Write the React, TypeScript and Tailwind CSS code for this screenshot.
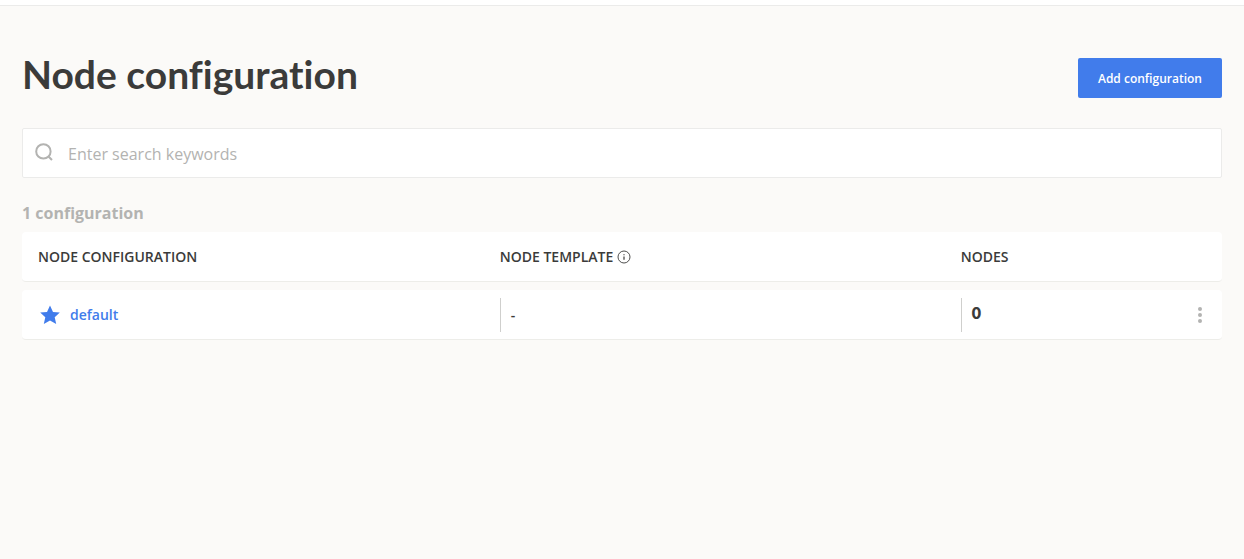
import React from "react";

type Configuration = { name: string; template: string; nodes: number };

const configurations: Configuration[] = [{ name: "default", template: "-", nodes: 0 }];

function SearchIcon() {
  return (
    <svg className="size-5 shrink-0" viewBox="0 0 20 20" fill="none" stroke="#b3b3b1" strokeWidth="2" aria-hidden="true">
      <circle cx="9.4" cy="9.4" r="7.2" />
      <path d="M14.2 14.2l3.8 3.8" />
    </svg>
  );
}

function InfoIcon() {
  return (
    <svg className="size-3.5" viewBox="0 0 14 14" fill="none" stroke="#3b3b3a" aria-hidden="true">
      <circle cx="7" cy="7" r="6" strokeWidth="0.9" />
      <path d="M7 6.5v3.3M7 4.2v1" strokeWidth="1.2" />
    </svg>
  );
}

function StarIcon() {
  return (
    <svg className="size-5" viewBox="0 0 20 20" fill="#417ceb" aria-hidden="true">
      <path d="M10 .4l3 6.5 6.8.7-5.1 4.6 1.5 6.8L10 15.5 3.8 19l1.5-6.8L.2 7.6l6.8-.7z" />
    </svg>
  );
}

function MoreIcon() {
  return (
    <svg className="h-4 w-1" viewBox="0 0 4 16" fill="#b3b3b1" aria-hidden="true">
      <circle cx="2" cy="2" r="2" />
      <circle cx="2" cy="8" r="2" />
      <circle cx="2" cy="14" r="2" />
    </svg>
  );
}

const cell = "h-[50px] border-b border-[#edede9] bg-white px-4 py-0 first:rounded-l-sm last:rounded-r-sm";

export default function App() {
  return (
    <div className="min-h-screen bg-[#fbfaf8] font-['Open_Sans',sans-serif] text-[#3b3b3a]">
      <div className="h-1.5 border-b border-[#ebebea] bg-white" />
      <main className="px-[22px] pt-[52px]">
        <header className="flex items-start justify-between">
          <h1 className="font-['Lato',sans-serif] text-[39px] leading-8 font-bold [font-variant-ligatures:none]">Node configuration</h1>
          <button type="button" className="h-10 rounded-xs bg-[#417ceb] px-5 pt-0.5 text-xs font-semibold text-white">
            Add configuration
          </button>
        </header>

        <label className="mt-[30px] flex h-[50px] items-center gap-3.5 rounded-xs border border-[#ebebea] bg-white px-[11px]">
          <span className="pb-0.5"><SearchIcon /></span>
          <input
            type="search"
            aria-label="Search configurations"
            placeholder="Enter search keywords"
            className="min-w-0 flex-1 bg-transparent pt-0.5 text-base outline-none placeholder:text-[#b3b3b1]"
          />
        </label>

        <p className="mt-6 text-base leading-[22px] font-bold text-[#b3b3b1]">1 configuration</p>

        <table className="w-full table-fixed border-separate border-spacing-x-0 border-spacing-y-2 text-left text-sm">
          <thead>
            <tr>
              <th scope="col" className={`w-[38.48%] font-semibold ${cell}`}>NODE CONFIGURATION</th>
              <th scope="col" className={`w-[38.42%] font-semibold ${cell}`}>
                <span className="flex items-center gap-1">NODE TEMPLATE <InfoIcon /></span>
              </th>
              <th scope="col" className={`font-semibold ${cell}`}>NODES</th>
            </tr>
          </thead>
          <tbody>
            {configurations.map((item) => (
              <tr key={item.name}>
                <td className={cell}>
                  <a href="#default" className="flex items-center gap-2.5 pl-0.5 font-semibold text-[#417ceb]">
                    <StarIcon />
                    {item.name}
                  </a>
                </td>
                <td className={cell}>
                  <div className="flex h-[34px] items-center border-l border-[#cfcfcd] pl-2.5 font-semibold">{item.template}</div>
                </td>
                <td className={cell}>
                  <div className="flex h-[34px] items-center justify-between border-l border-[#cfcfcd] pl-2.5">
                    <span className="pb-1 font-['Lato',sans-serif] text-base font-extrabold">{item.nodes}</span>
                    <button type="button" aria-label="More actions" className="px-1">
                      <MoreIcon />
                    </button>
                  </div>
                </td>
              </tr>
            ))}
          </tbody>
        </table>
      </main>
    </div>
  );
}
